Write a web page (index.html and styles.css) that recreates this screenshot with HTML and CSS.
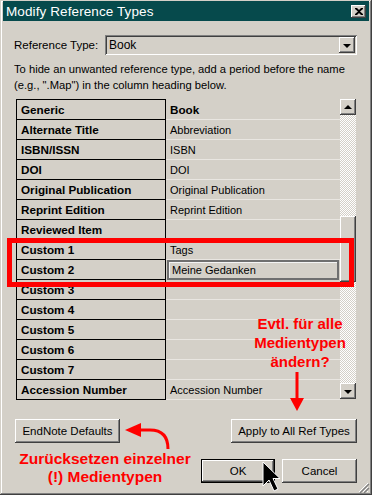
FILE: index.html
```html
<!DOCTYPE html>
<html lang="en">
<head>
    <meta charset="UTF-8">
    <title>Modify Reference Types</title>
    <link rel="stylesheet" href="styles.css">
</head>
<body>
    <div class="window">
        <div class="titlebar">
            <span class="title">Modify Reference Types</span>
            <span class="close-btn">
                <svg width="8" height="7" viewBox="0 0 8 7"><path d="M0 0h2l2 2 2-2h2v1L5 3.5 8 6v1H6L4 5 2 7H0V6l3-2.5L0 1z" fill="#000"/></svg>
            </span>
        </div>

        <div class="content">
            <div class="type-row">
                <label>Reference Type:</label>
                <div class="combo">
                    <span class="combo-value">Book</span>
                    <span class="combo-btn"><span class="tri-down"></span></span>
                </div>
            </div>

            <p class="hint">To hide an unwanted reference type, add a period before the name<br>(e.g., ".Map") in the column heading below.</p>

            <div class="grid-wrap">
                <div class="grid">
                    <div class="cell-name first">Generic</div><div class="cell-value head">Book</div>
                    <div class="cell-name">Alternate Title</div><div class="cell-value">Abbreviation</div>
                    <div class="cell-name">ISBN/ISSN</div><div class="cell-value">ISBN</div>
                    <div class="cell-name">DOI</div><div class="cell-value">DOI</div>
                    <div class="cell-name">Original Publication</div><div class="cell-value">Original Publication</div>
                    <div class="cell-name">Reprint Edition</div><div class="cell-value">Reprint Edition</div>
                    <div class="cell-name">Reviewed Item</div><div class="cell-value"></div>
                    <div class="cell-name">Custom 1</div><div class="cell-value">Tags</div>
                    <div class="cell-name">Custom 2</div><div class="cell-value editing"><span class="edit-box">Meine Gedanken</span></div>
                    <div class="cell-name">Custom 3</div><div class="cell-value"></div>
                    <div class="cell-name">Custom 4</div><div class="cell-value"></div>
                    <div class="cell-name">Custom 5</div><div class="cell-value"></div>
                    <div class="cell-name">Custom 6</div><div class="cell-value"></div>
                    <div class="cell-name">Custom 7</div><div class="cell-value"></div>
                    <div class="cell-name">Accession Number</div><div class="cell-value">Accession Number</div>
                </div>
                <div class="scrollbar">
                    <span class="sb-btn"><span class="tri-up"></span></span>
                    <span class="sb-track"></span>
                    <span class="sb-thumb"></span>
                    <span class="sb-track rest"></span>
                    <span class="sb-btn"><span class="tri-down"></span></span>
                </div>
            </div>

            <div class="btn-row">
                <button class="btn btn-defaults">EndNote Defaults</button>
                <button class="btn btn-apply">Apply to All Ref Types</button>
            </div>
            <div class="btn-row end">
                <button class="btn btn-ok">OK</button>
                <button class="btn btn-cancel">Cancel</button>
            </div>
        </div>

        <!-- annotations drawn on top of the dialog -->
        <div class="mark-box"></div>
        <div class="note note-right">Evtl. für alle<br>Medientypen<br>ändern?</div>
        <div class="note note-left">Zurücksetzen einzelner<br>(!) Medientypen</div>
        <svg class="overlay" width="372" height="495" viewBox="0 0 372 495">
            <path d="M297 372V400" stroke="#f00" stroke-width="3" fill="none"/>
            <path d="M290 398H304L297 411Z" fill="#f00"/>
            <path d="M168 449C168 437 163 430 150 430H138" stroke="#f00" stroke-width="3" fill="none"/>
            <path d="M125 430L141 423V437Z" fill="#f00"/>
            <path d="M263 462V486L269 480L274 491L278 489L273 478.5H280Z" fill="#000" stroke="#fff" stroke-width="1"/>
            <path d="M368 483L359 492M368 487L363 492M368 491L367 492" stroke="#fff" stroke-width="1"/>
            <path d="M369 484L360 493M369 488L364 493" stroke="#808080" stroke-width="1.4"/>
        </svg>
    </div>
</body>
</html>
```

FILE: styles.css
```css
:root {
    --face: #d4d0c8;
    --shadow: #808080;
    --dark: #404040;
    --light: #ffffff;
    --title: #064a4c;
    --note: #ff0000;
}

body {
    margin: 0;
    font-family: "Liberation Sans", Arial, sans-serif;
    font-size: 11px;
    color: #000;
    background-color: var(--face);
}

.window {
    position: relative;
    width: 372px;
    height: 495px;
    box-sizing: border-box;
    padding: 1px 3px 3px 3px;
    background-color: var(--face);
    box-shadow: inset -1px -1px var(--dark), inset 1px 1px var(--face), inset -2px -2px var(--shadow), inset 2px 2px var(--light);
    overflow: hidden;
}

.titlebar {
    display: flex;
    align-items: center;
    justify-content: space-between;
    height: 20px;
    padding: 0 3px 0 3px;
    background-color: var(--title);
}

.title {
    color: #fff;
    font-size: 13.5px;
    letter-spacing: 0.1px;
}

.close-btn {
    display: flex;
    align-items: center;
    justify-content: center;
    width: 15px;
    height: 13px;
    background-color: var(--face);
    box-shadow: inset -1px -1px var(--dark), inset 1px 1px var(--light), inset -2px -2px var(--shadow);
}

.content {
    padding: 14px 12px 0 11px;
}

.type-row {
    display: flex;
    align-items: center;
}

.type-row label {
    width: 91px;
    font-size: 11.5px;
}

.combo {
    flex: 1;
    display: flex;
    align-items: center;
    justify-content: space-between;
    height: 20px;
    padding: 2px;
    box-sizing: border-box;
    box-shadow: inset 1px 1px var(--shadow), inset -1px -1px var(--light), inset 2px 2px var(--dark), inset -2px -2px var(--face);
}

.combo-value {
    padding-left: 2px;
    font-size: 12px;
}

.combo-btn,
.sb-btn {
    display: flex;
    align-items: center;
    justify-content: center;
    width: 16px;
    height: 16px;
    box-sizing: border-box;
    background-color: var(--face);
    box-shadow: inset -1px -1px var(--dark), inset 1px 1px var(--light), inset -2px -2px var(--shadow);
}

.tri-down {
    width: 0;
    height: 0;
    border-left: 4px solid transparent;
    border-right: 4px solid transparent;
    border-top: 4px solid #000;
    margin-top: 1px;
}

.tri-up {
    width: 0;
    height: 0;
    border-left: 4px solid transparent;
    border-right: 4px solid transparent;
    border-bottom: 4px solid #000;
    margin-bottom: 1px;
}

.hint {
    margin: 6px 0 0 0;
    line-height: 16px;
    font-size: 11.2px;
    white-space: nowrap;
}

.grid-wrap {
    display: flex;
    margin: 6px 0 0 2px;
}

.grid {
    display: grid;
    grid-template-columns: 150px 174px;
    grid-template-rows: 21px;
    grid-auto-rows: 20px;
}

.cell-name {
    display: flex;
    align-items: center;
    padding-left: 4px;
    border: 1px solid #000;
    border-top: none;
    font-weight: bold;
    font-size: 11.7px;
}

.cell-name.first {
    border-top: 1px solid #000;
}

.cell-value {
    display: flex;
    align-items: center;
    padding-left: 4px;
    border-bottom: 1px solid #e9e6e1;
    font-size: 11px;
}

.cell-value.head {
    font-weight: bold;
    font-size: 11.7px;
    padding-top: 1px;
}

.cell-value.editing {
    padding: 0 1px 0 1px;
    border-bottom: none;
}

.edit-box {
    flex: 1;
    height: 20px;
    box-sizing: border-box;
    display: flex;
    align-items: center;
    padding-left: 3px;
    border: 2px solid #6f6f6f;
    box-shadow: inset 1px 1px #f4f4f4;
}

.scrollbar {
    display: flex;
    flex-direction: column;
    width: 16px;
    height: 300px;
}

.sb-track {
    height: 101px;
    background-image: conic-gradient(#fff 25%, var(--face) 0 50%, #fff 0 75%, var(--face) 0);
    background-size: 2px 2px;
}

.sb-track.rest {
    flex: 1;
}

.sb-thumb {
    height: 66px;
    background-color: var(--face);
    box-shadow: inset -1px -1px var(--dark), inset 1px 1px var(--light), inset -2px -2px var(--shadow);
}

.btn-row {
    display: flex;
    justify-content: space-between;
    margin: 19px 0 0 1px;
}

.btn-row.end {
    justify-content: flex-end;
    gap: 7px;
    margin-top: 16px;
}

.btn {
    height: 24px;
    padding: 0;
    border: none;
    font-family: inherit;
    font-size: 11.5px;
    color: #000;
    background-color: var(--face);
    box-shadow: inset -1px -1px var(--dark), inset 1px 1px var(--light), inset -2px -2px var(--shadow);
}

.btn-defaults {
    width: 105px;
}

.btn-apply {
    width: 126px;
}

.btn-ok {
    width: 74px;
    box-shadow: inset 0 0 0 1px #000, inset -2px -2px var(--dark), inset 2px 2px var(--light), inset -3px -3px var(--shadow);
}

.btn-cancel {
    width: 75px;
}

.mark-box {
    position: absolute;
    left: 7px;
    top: 238px;
    width: 347px;
    height: 49px;
    box-sizing: border-box;
    border: 5px solid var(--note);
}

.note {
    position: absolute;
    color: var(--note);
    font-weight: bold;
    font-size: 15px;
    text-align: center;
}

.note-right {
    left: 240px;
    top: 314px;
    width: 120px;
    line-height: 19px;
}

.note-left {
    left: 5px;
    top: 450px;
    width: 200px;
    line-height: 18px;
    font-size: 15.5px;
}

.overlay {
    position: absolute;
    left: 0;
    top: 0;
}
```
